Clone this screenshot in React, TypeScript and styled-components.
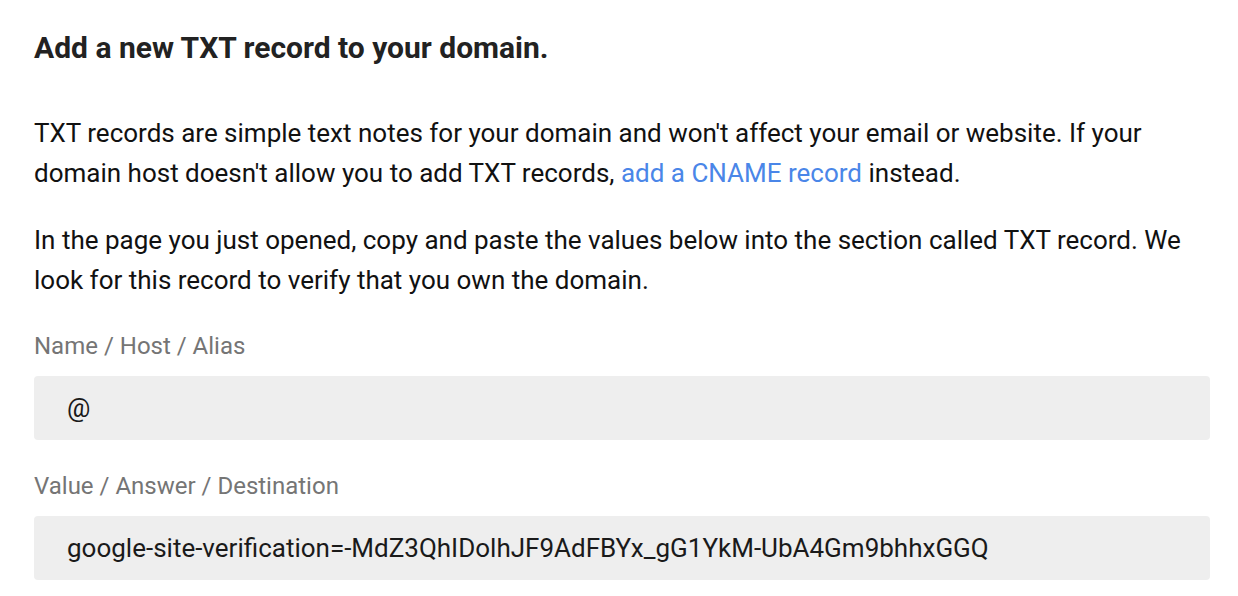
import React from "react";
import styled, { createGlobalStyle } from "styled-components";

const Global = createGlobalStyle`
  html, body { margin: 0; padding: 0; background: #ffffff; }
  body { font-family: Roboto, "Noto Sans", Arial, sans-serif; -webkit-font-smoothing: antialiased; }
`;

const Page = styled.div`
  width: 1176px;
  padding: 30px 0 0 34px;
  display: flex;
  flex-direction: column;
  color: #202124;
`;

const Heading = styled.h1`
  margin: 0;
  font-size: 30px;
  line-height: 36px;
  font-weight: 700;
  color: #222222;
`;

const Paragraph = styled.p<{ $top: number }>`
  margin: ${(p) => p.$top}px 0 0;
  font-size: 26px;
  line-height: 40px;
  font-weight: 400;
  color: #111111;
`;

const Link = styled.a`
  color: #4a86e8;
  text-decoration: none;
`;

const Field = styled.div<{ $top: number }>`
  margin-top: ${(p) => p.$top}px;
  display: flex;
  flex-direction: column;
  gap: 14px;
`;

const Label = styled.div`
  font-size: 24px;
  line-height: 32px;
  color: #757575;
`;

const ValueBox = styled.div`
  height: 64px;
  box-sizing: border-box;
  padding: 0 33px;
  display: flex;
  align-items: center;
  background: #eeeeee;
  border-radius: 4px;
  font-size: 26px;
  color: #1a1a1a;
`;

export default function App() {
  return (
    <>
      <Global />
      <Page>
        <Heading>Add a new TXT record to your domain.</Heading>
        <Paragraph $top={47}>
          TXT records are simple text notes for your domain and won't affect your email or website. If your
          domain host doesn't allow you to add TXT records, <Link href="#">add a CNAME record</Link> instead.
        </Paragraph>
        <Paragraph $top={27}>
          In the page you just opened, copy and paste the values below into the section called TXT record. We
          look for this record to verify that you own the domain.
        </Paragraph>
        <Field $top={30}>
          <Label>Name / Host / Alias</Label>
          <ValueBox>@</ValueBox>
        </Field>
        <Field $top={30}>
          <Label>Value / Answer / Destination</Label>
          <ValueBox>google-site-verification=-MdZ3QhIDolhJF9AdFBYx_gG1YkM-UbA4Gm9bhhxGGQ</ValueBox>
        </Field>
      </Page>
    </>
  );
}
